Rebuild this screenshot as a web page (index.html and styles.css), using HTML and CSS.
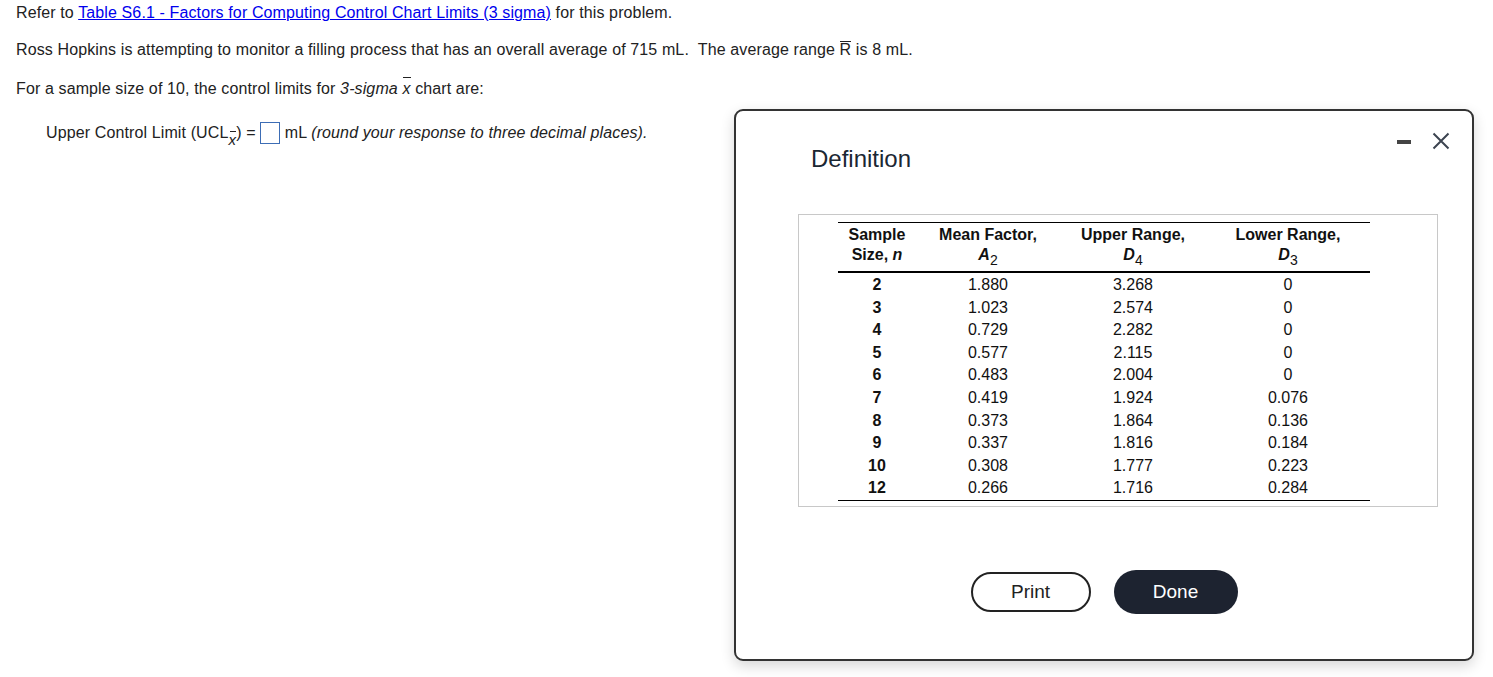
FILE: index.html
```html
<!DOCTYPE html>
<html>
<head>
<meta charset="utf-8">
<link rel="stylesheet" href="styles.css">
</head>
<body>
<div class="page">
  <p class="line l1">Refer to <a class="link" href="#">Table S6.1 - Factors for Computing Control Chart Limits (3 sigma)</a> for this problem.</p>
  <p class="line l2">Ross Hopkins is attempting to monitor a filling process that has an overall average of 715 mL.&nbsp; The average range <span class="bar">R</span> is 8 mL.</p>
  <p class="line l3">For a sample size of 10, the control limits for <i>3-sigma</i> <span class="bar xbar"><i>x</i></span> chart are:</p>
  <p class="line l4">Upper Control Limit (UCL<sub class="sub"><span class="bar xbar"><i>x</i></span></sub>) = <span class="answer"></span> mL <i>(round your response to three decimal places).</i></p>
</div>

<div class="modal">
  <div class="modal-head">
    <h2 class="title">Definition</h2>
    <div class="controls">
      <span class="minimize"></span>
      <svg class="close" width="18" height="18" viewBox="0 0 18 18"><path d="M1.5 1.5 L16.5 16.5 M16.5 1.5 L1.5 16.5" stroke="#3c4450" stroke-width="2" fill="none"/></svg>
    </div>
  </div>
  <div class="tablebox">
    <table class="factors">
      <thead>
        <tr>
          <th class="c1">Sample<br>Size, <i>n</i></th>
          <th class="c2">Mean Factor,<br><i>A</i><sub>2</sub></th>
          <th class="c3">Upper Range,<br><i>D</i><sub>4</sub></th>
          <th class="c4">Lower Range,<br><i>D</i><sub>3</sub></th>
        </tr>
      </thead>
      <tbody>
        <tr><td class="n">2</td><td>1.880</td><td>3.268</td><td>0</td></tr>
        <tr><td class="n">3</td><td>1.023</td><td>2.574</td><td>0</td></tr>
        <tr><td class="n">4</td><td>0.729</td><td>2.282</td><td>0</td></tr>
        <tr><td class="n">5</td><td>0.577</td><td>2.115</td><td>0</td></tr>
        <tr><td class="n">6</td><td>0.483</td><td>2.004</td><td>0</td></tr>
        <tr><td class="n">7</td><td>0.419</td><td>1.924</td><td>0.076</td></tr>
        <tr><td class="n">8</td><td>0.373</td><td>1.864</td><td>0.136</td></tr>
        <tr><td class="n">9</td><td>0.337</td><td>1.816</td><td>0.184</td></tr>
        <tr><td class="n">10</td><td>0.308</td><td>1.777</td><td>0.223</td></tr>
        <tr><td class="n">12</td><td>0.266</td><td>1.716</td><td>0.284</td></tr>
      </tbody>
    </table>
  </div>
  <div class="buttons">
    <button class="btn print">Print</button>
    <button class="btn done">Done</button>
  </div>
</div>
</body>
</html>
```

FILE: styles.css
```css
html, body {
  margin: 0;
  padding: 0;
  background: #fff;
}
body {
  font-family: "Liberation Sans", Arial, sans-serif;
  color: #222;
  font-size: 16px;
}
.page {
  padding: 4px 0 0 16px;
  letter-spacing: 0.12px;
}
.line {
  margin: 0;
  line-height: 18px;
}
.l2 { margin-top: 19px; }
.l3 { margin-top: 21px; }
.l4 { margin-top: 24px; padding-left: 30px; }
.link {
  color: #0000ee;
  text-decoration: underline;
}
.bar {
  position: relative;
  display: inline-block;
}
.bar::before {
  content: "";
  position: absolute;
  left: 0;
  right: 0;
  top: 0;
  border-top: 1px solid #222;
}
.xbar::before {
  left: 1px;
  right: 0;
  top: -3px;
}
.sub {
  font-size: 15px;
  vertical-align: -7px;
  line-height: 0;
}
.sub .bar {
  line-height: 15px;
}
.sub .xbar::before {
  top: -1px;
}
.answer {
  display: inline-block;
  width: 18px;
  height: 20px;
  border: 1px solid #3d6db5;
  vertical-align: -6px;
}

.modal {
  position: absolute;
  left: 734px;
  top: 109px;
  width: 736px;
  height: 548px;
  border: 2px solid #333;
  border-radius: 9px;
  background: #fff;
  box-shadow: 0 5px 14px rgba(0,0,0,0.16);
  box-sizing: content-box;
}
.modal-head {
  display: flex;
  justify-content: space-between;
  align-items: flex-start;
  padding: 20px 22px 0 75px;
  height: 103px;
  box-sizing: border-box;
}
.title {
  margin: 14px 0 0 0;
  font-weight: normal;
  font-size: 24px;
  line-height: 28px;
  color: #1b2733;
}
.controls {
  display: flex;
  align-items: center;
  gap: 21px;
  margin-top: 1px;
}
.minimize {
  display: block;
  width: 14px;
  height: 4px;
  background: #444;
  margin-top: 2px;
}
.close {
  display: block;
}
.tablebox {
  margin-left: 62px;
  width: 638px;
  height: 284px;
  border: 1px solid #c8c8c8;
  padding-top: 7px;
  box-sizing: content-box;
}
.factors {
  margin-left: 39px;
  width: 532px;
  border-collapse: collapse;
  font-size: 16px;
  color: #111;
}
.factors th {
  font-weight: bold;
  line-height: 20px;
  padding: 2px 0 6px 0;
  border-top: 1px solid #000;
  border-bottom: 2px solid #000;
  text-align: center;
  vertical-align: top;
}
.factors th sub {
  font-weight: normal;
  font-size: 14px;
  vertical-align: -5px;
  line-height: 0;
}
.factors th i { font-style: italic; }
.c1 { width: 78px; }
.c2 { width: 144px; }
.c3 { width: 146px; }
.c4 { width: 164px; }
.factors td {
  text-align: center;
  padding: 0;
  height: 22.6px;
  line-height: 22.6px;
}
.factors td.n { font-weight: bold; }
.factors tbody tr:first-child td {
  padding-top: 1px;
}
.factors tbody tr:last-child td {
  border-bottom: 1px solid #000;
}
.buttons {
  display: flex;
  justify-content: center;
  gap: 23px;
  margin-top: 63px;
  align-items: center;
}
.btn {
  font-family: "Liberation Sans", Arial, sans-serif;
  font-size: 19px;
  border-radius: 22px;
  cursor: pointer;
}
.print {
  width: 120px;
  height: 40px;
  background: #fff;
  border: 2px solid #222;
  color: #222;
}
.done {
  width: 124px;
  height: 44px;
  background: #1d2330;
  border: none;
  color: #fff;
}
```
